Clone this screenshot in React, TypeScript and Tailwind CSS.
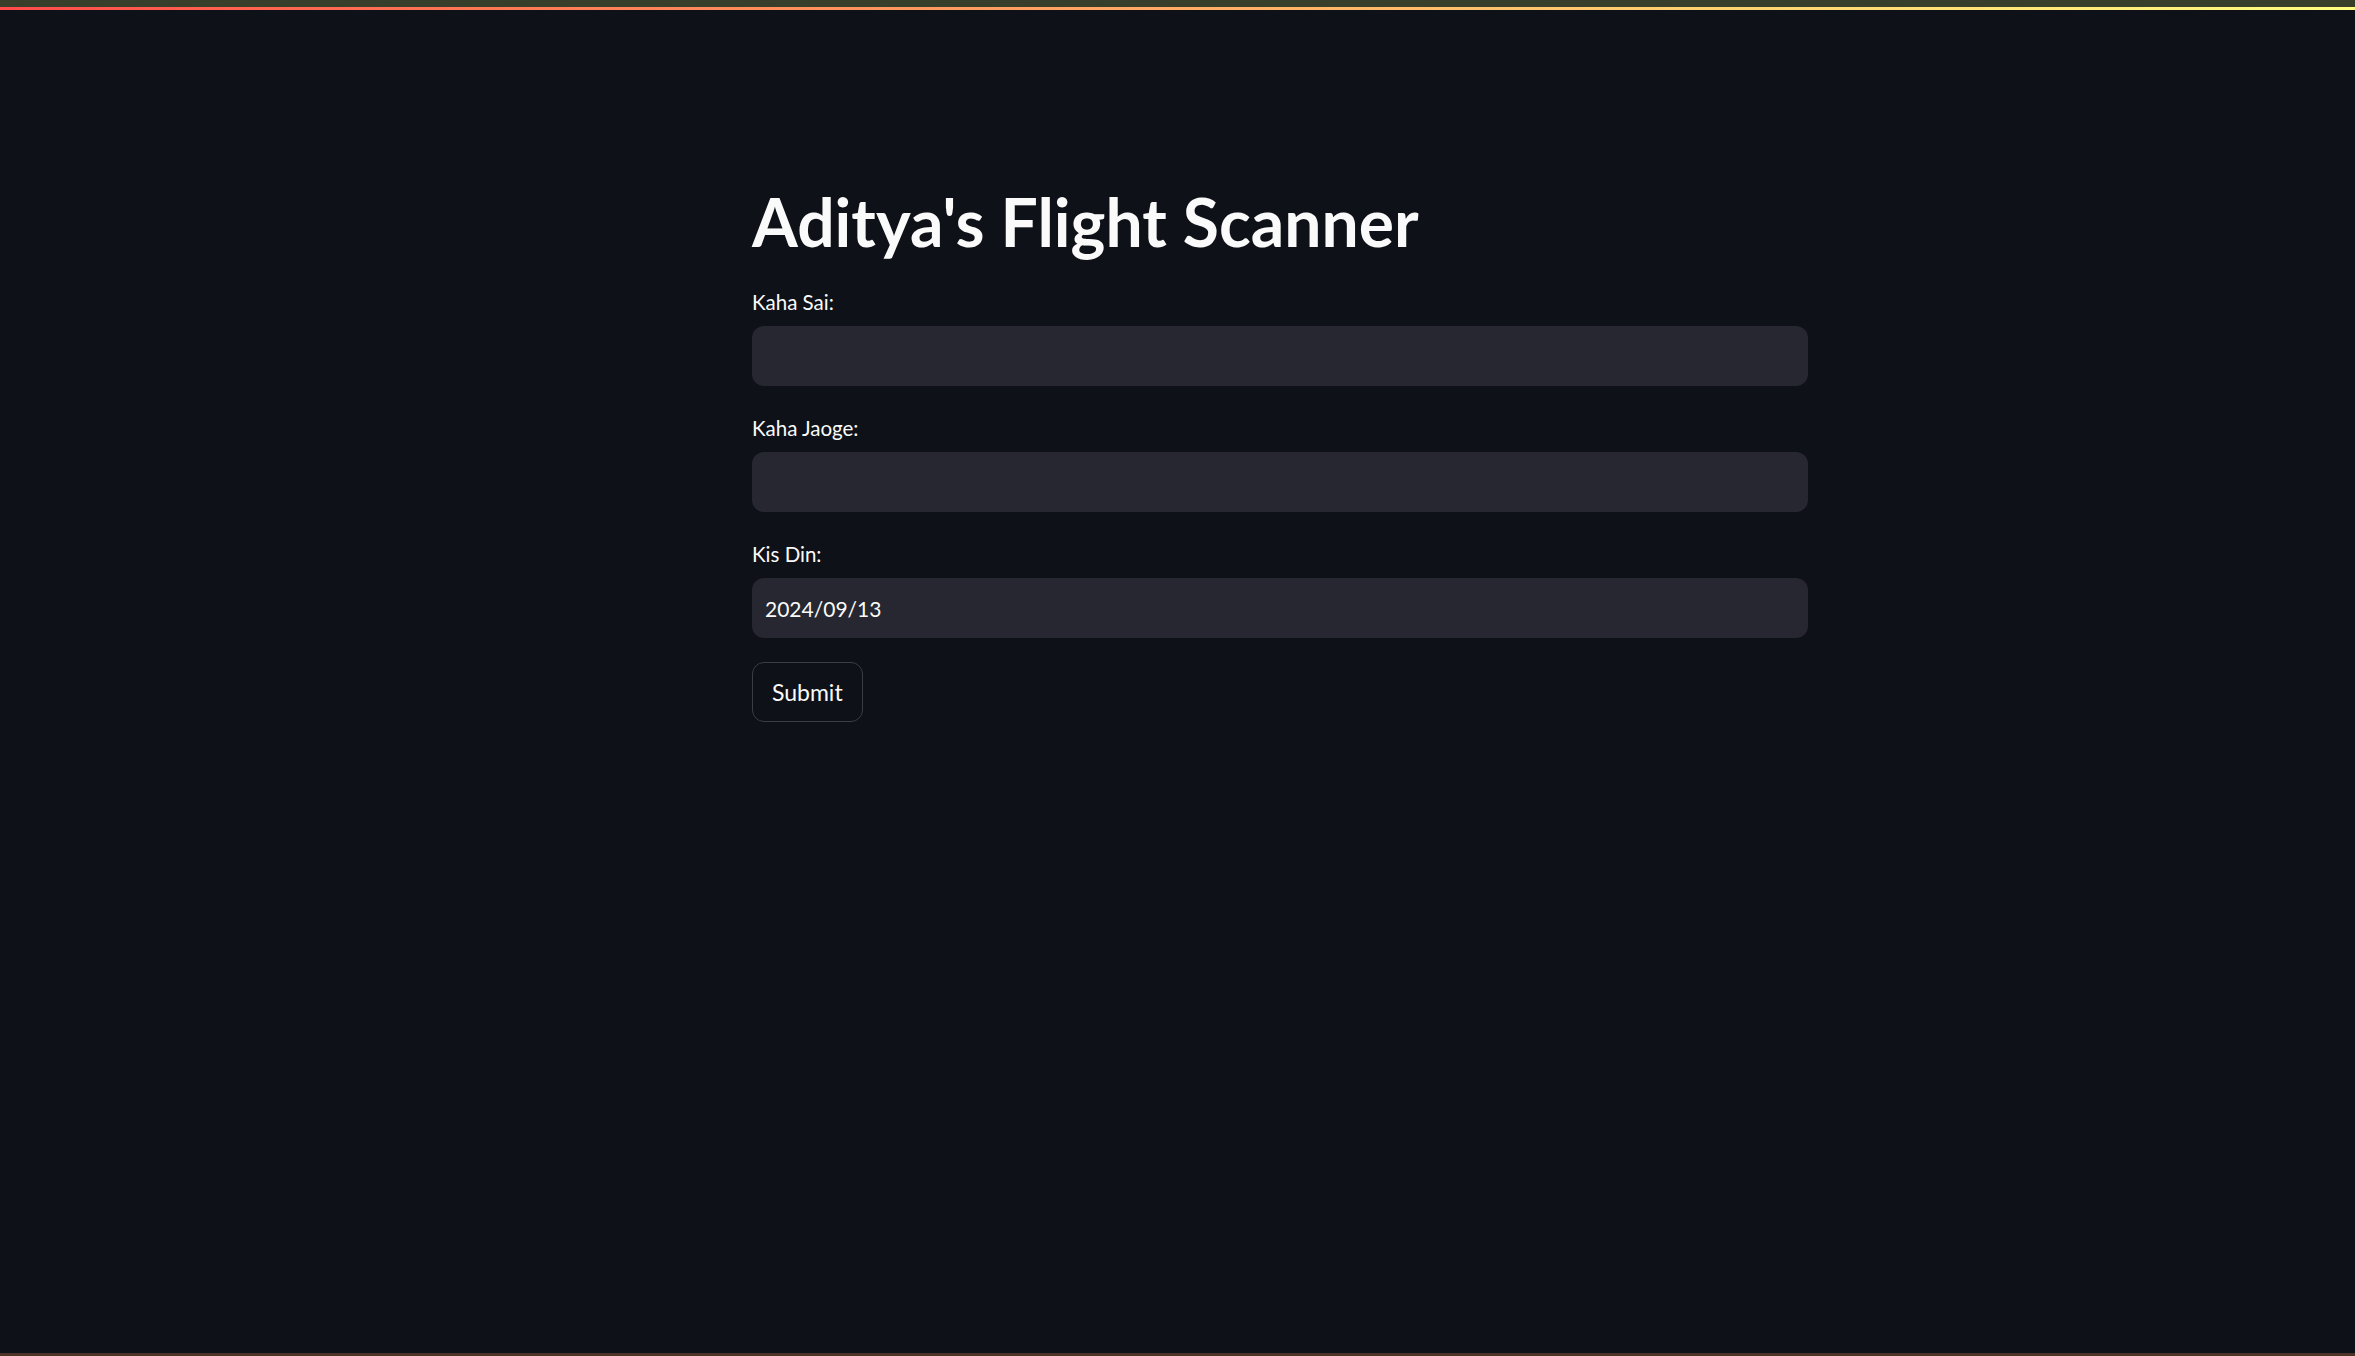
export default function App() {
  const fields = [
    { label: 'Kaha Sai:', value: '' },
    { label: 'Kaha Jaoge:', value: '' },
    { label: 'Kis Din:', value: '2024/09/13' },
  ];

  return (
    <div className="h-screen w-full flex flex-col bg-[#0e1117] text-[#fafafa] font-['Lato','Noto_Sans',sans-serif] overflow-hidden">
      {/* header strip + decoration */}
      <div className="h-[7px] bg-[#373f2a]" />
      <div className="h-[3px] bg-linear-to-r from-[#ff4b4b] to-[#fffd80]" />

      <main className="flex-1 pl-[752px] pt-[172px]">
        <div className="w-[1056px] flex flex-col">
          <h1 className="text-[66px] font-bold leading-[79px] mb-[23px]">
            Aditya's Flight Scanner
          </h1>

          <div className="flex flex-col gap-[24px]">
            {fields.map((f) => (
              <div key={f.label} className="flex flex-col">
                <label className="h-[36px] mb-[6px] text-[20.5px] leading-[36px]">{f.label}</label>
                <input
                  type="text"
                  defaultValue={f.value}
                  className="h-[60px] w-full rounded-[12px] bg-[#262730] px-[13px] text-[21px] text-[#fafafa] outline-none"
                />
              </div>
            ))}

            <div>
              <button className="h-[60px] px-[19px] rounded-[12px] border border-[#3b3d46] bg-[#0e1117] text-[23px] text-[#fafafa]">
                Submit
              </button>
            </div>
          </div>
        </div>
      </main>

      <div className="h-[3px] bg-[#4b3327]" />
    </div>
  );
}
